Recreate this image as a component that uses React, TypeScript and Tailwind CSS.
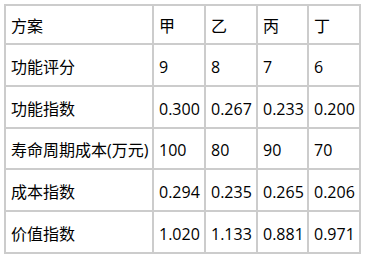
import React from "react";

const rows: string[][] = [
  ["方案", "甲", "乙", "丙", "丁"],
  ["功能评分", "9", "8", "7", "6"],
  ["功能指数", "0.300", "0.267", "0.233", "0.200"],
  ["寿命周期成本(万元)", "100", "80", "90", "70"],
  ["成本指数", "0.294", "0.235", "0.265", "0.206"],
  ["价值指数", "1.020", "1.133", "0.881", "0.971"],
];

const heights = ["h-[39px]", "h-[42px]", "h-[42px]", "h-[41px]", "h-[42px]", "h-[42px]"];

export default function App() {
  return (
    <div className="w-[365px] h-[259px] bg-white overflow-hidden pt-[4px] pl-[4px]">
      <div
        className="grid grid-cols-[148px_52px_52px_51px_52px] w-max border-l-2 border-t-2 border-[#cccccc] text-[16px] text-black"
        style={{ fontFamily: '"Open Sans", "Noto Sans CJK SC", sans-serif' }}
      >
        {rows.map((r, i) =>
          r.map((c, j) => (
            <div
              key={i + "-" + j}
              className={
                heights[i] +
                " flex items-center pl-[5px] pt-[3px] border-r-2 border-b-2 border-[#cccccc] whitespace-nowrap leading-none"
              }
            >
              {c}
            </div>
          ))
        )}
      </div>
    </div>
  );
}
